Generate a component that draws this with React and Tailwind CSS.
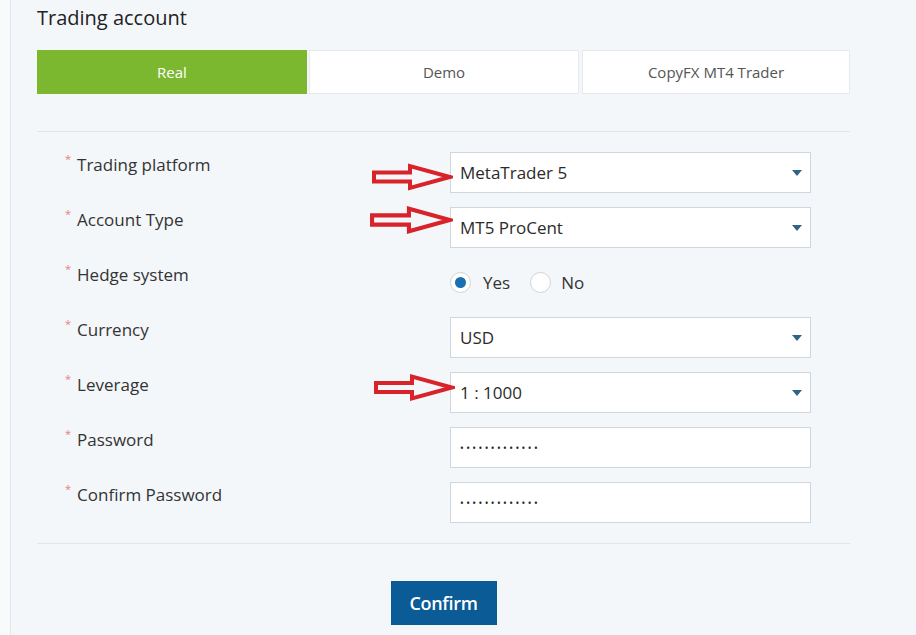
const FONT = { fontFamily: '"Open Sans", "Noto Sans", sans-serif' }

function Arrow({ className }) {
  return (
    <svg className={className} viewBox="0 0 82 28" fill="none">
      <path
        d="M3 9.5 H39 V3 L79 14 L39 25 V18.5 H3 Z"
        stroke="#d8232a"
        strokeWidth="4"
        strokeLinejoin="miter"
      />
    </svg>
  )
}

function Caret() {
  return (
    <svg width="10" height="6" viewBox="0 0 10 6" className="absolute right-[8px] top-1/2 -translate-y-1/2">
      <path d="M0 0 H10 L5 6 Z" fill="#2f6485" />
    </svg>
  )
}

function Field({ children, arrow }) {
  return (
    <div className="relative w-[361px] h-[41px] bg-white border border-[#cfd6dd] flex items-center pl-[9px] text-[17px] font-medium text-[#2b2b2b]">
      {arrow}
      {children}
    </div>
  )
}

function Row({ label, children }) {
  return (
    <div className="flex items-start h-[41px] mb-[14px]">
      <div className="w-[413px] pl-[28px] flex items-start text-[17px] text-[#333] leading-[26px]">
        <span className="text-[#e88080] text-[11px] leading-[14px] mr-[6px]">*</span>
        <span>{label}</span>
      </div>
      {children}
    </div>
  )
}

function Dots() {
  return <span className="text-[10px] tracking-[2.4px] text-[#222] pt-[2px]">•••••••••••••</span>
}

export default function App() {
  return (
    <div className="w-[916px] h-[635px] bg-[#f8fafc] overflow-hidden" style={FONT}>
      <div className="ml-[10px] h-full border-l border-[#e1e6eb] bg-[#f4f7fa] pl-[26px]">
        <div className="w-[813px]">
          <div className="h-[36px] flex items-center text-[20px] text-[#222]">Trading account</div>

          {/* account kind tabs */}
          <div className="mt-[14px] flex h-[44px] text-[15px]">
            <div className="w-[270px] bg-[#7cb82f] text-white flex items-center justify-center">Real</div>
            <div className="ml-[2px] w-[270px] bg-white border border-[#e6eaee] text-[#555] flex items-center justify-center">Demo</div>
            <div className="ml-[3px] w-[268px] bg-white border border-[#e6eaee] text-[#555] flex items-center justify-center">CopyFX MT4 Trader</div>
          </div>

          <div className="mt-[37px] border-t border-[#e1e6eb]" />

          <div className="pt-[20px]">
            <Row label="Trading platform">
              <Field arrow={<Arrow className="absolute right-full -mr-[2px] top-[10px] w-[82px] h-[28px]" />}>
                MetaTrader 5<Caret />
              </Field>
            </Row>
            <Row label="Account Type">
              <Field arrow={<Arrow className="absolute right-full -mr-[2px] -top-[3px] w-[84px] h-[30px]" />}>
                MT5 ProCent<Caret />
              </Field>
            </Row>
            <Row label="Hedge system">
              <div className="h-[41px] flex items-center text-[17px] text-[#333]">
                <span className="w-[21px] h-[21px] rounded-full border border-[#cfd4d9] bg-white flex items-center justify-center">
                  <span className="w-[11px] h-[11px] rounded-full bg-[#1a6fb0]" />
                </span>
                <span className="ml-[12px]">Yes</span>
                <span className="ml-[20px] w-[21px] h-[21px] rounded-full border border-[#cfd4d9] bg-white" />
                <span className="ml-[10px]">No</span>
              </div>
            </Row>
            <Row label="Currency">
              <Field>
                USD<Caret />
              </Field>
            </Row>
            <Row label="Leverage">
              <Field arrow={<Arrow className="absolute right-full -mr-[4px] top-[0px] w-[82px] h-[29px]" />}>
                <span className="font-normal">1 : 1000</span>
                <Caret />
              </Field>
            </Row>
            <Row label="Password">
              <Field>
                <Dots />
              </Field>
            </Row>
            <Row label="Confirm Password">
              <Field>
                <Dots />
              </Field>
            </Row>
          </div>

          <div className="mt-[20px] border-t border-[#e1e6eb]" />

          <div className="mt-[37px] flex justify-center">
            <button className="w-[106px] h-[44px] bg-[#0b5b97] text-white text-[18px] font-semibold tracking-[-0.3px]">
              Confirm
            </button>
          </div>
        </div>
      </div>
    </div>
  )
}
